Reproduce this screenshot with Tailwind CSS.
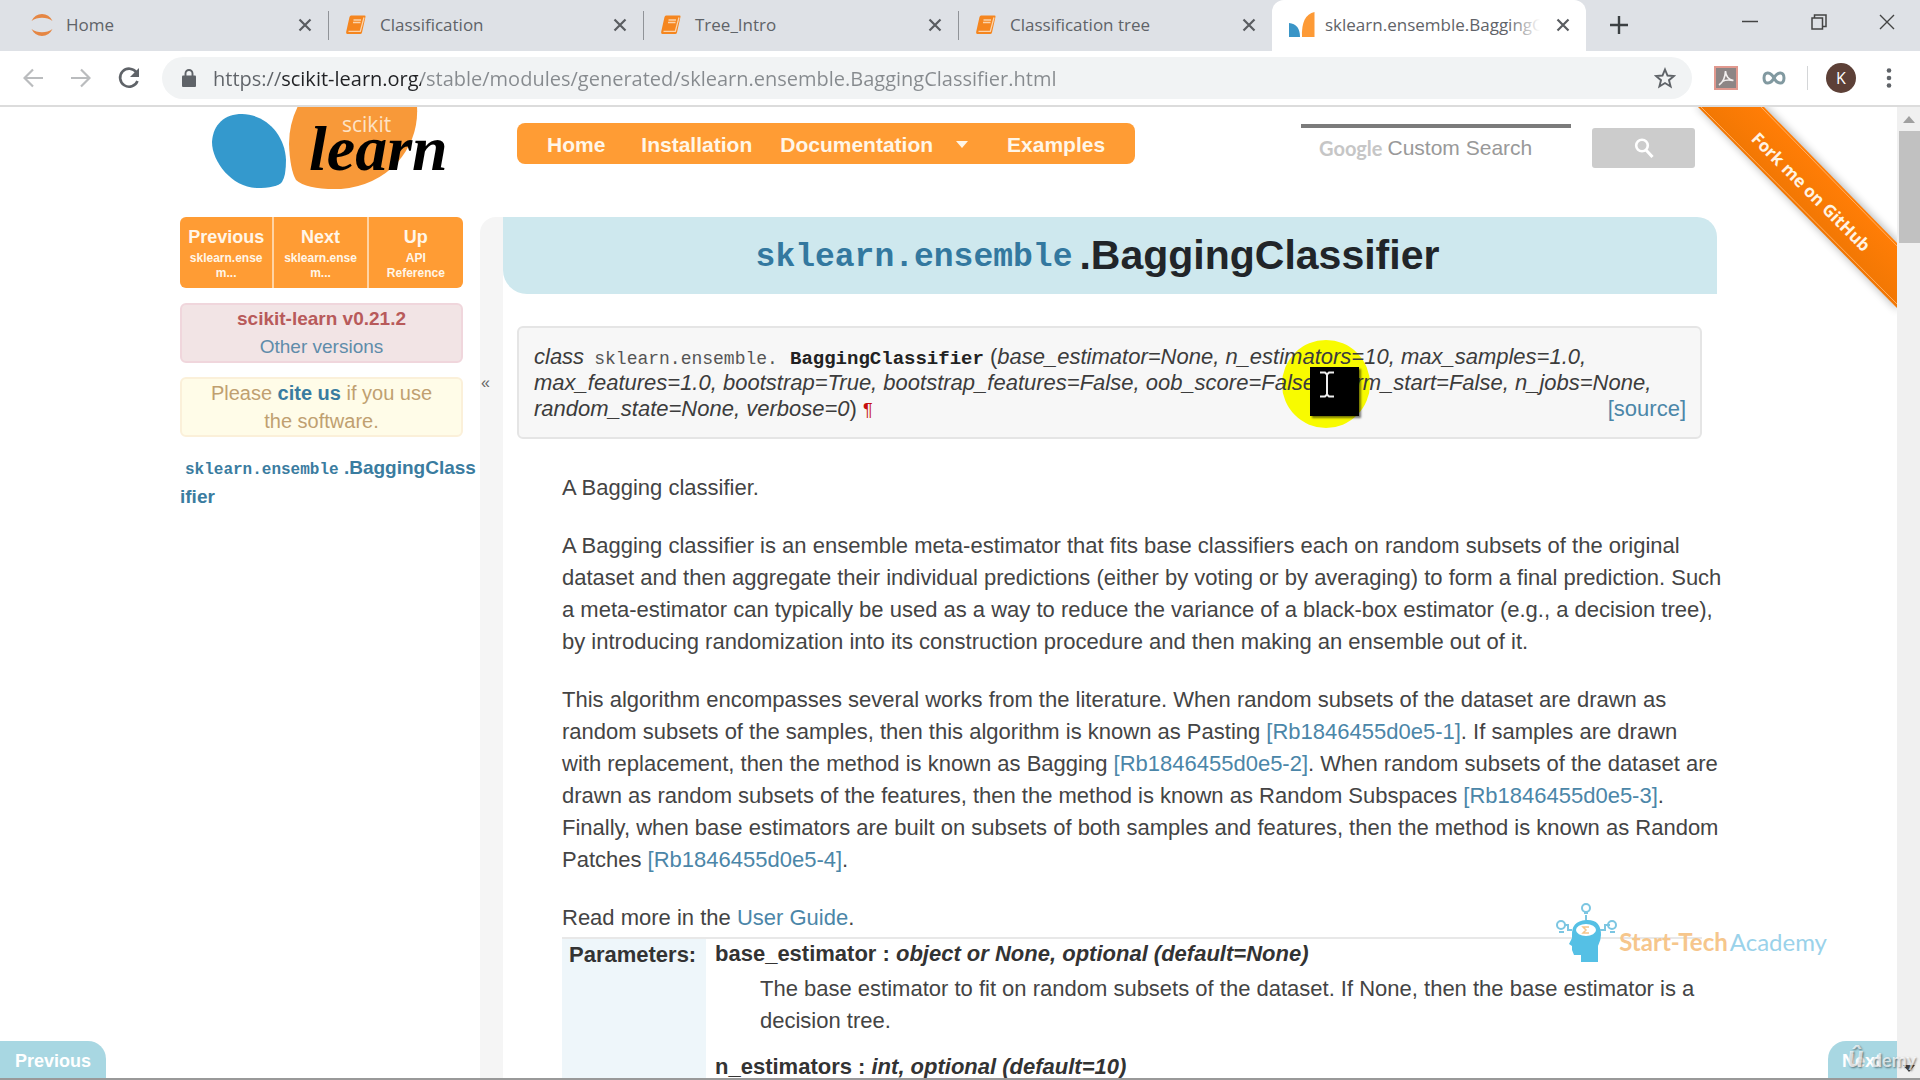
<!DOCTYPE html>
<html lang="en">
<head>
<meta charset="utf-8">
<title>sklearn.ensemble.BaggingClassifier</title>
<script src="https://cdn.jsdelivr.net/npm/@tailwindcss/browser@4"></script>
</head>
<body class="h-screen overflow-hidden bg-white font-['Liberation_Sans',Arial,sans-serif] text-[#444]">
<svg class="hidden">
  <symbol id="book" viewBox="0 0 22 22"><path d="M6 1.500h13.500q1.300 0 1 1.300L17 18.500q-.4 1.500-1.800 1.500H3q-2.300 0-1.800-2.300L4.500 3Q5 1.500 6 1.500z" fill="#f5861f"/><path d="M8.500 6h7.500M8 8.500h7.500M3.500 17.300h11.800L19 3.500" stroke="#fbd3ab" stroke-width="1.300" fill="none"/></symbol>
  <symbol id="x" viewBox="0 0 14 14"><path d="M1.500 1.500l11 11M12.500 1.500l-11 11" stroke="#5a5d61" stroke-width="2.200"/></symbol>
</svg>
<div class="flex h-full flex-col">
  <header class="shrink-0 font-['Open_Sans','Noto_Sans',sans-serif]">
    <div class="flex h-[51px] items-stretch bg-[#dee1e6] text-[17px] text-[#5f6368]">
      <div class="flex w-[328px] items-center pb-0.5 pl-[30px] pr-4">
        <svg class="h-6 w-6" viewBox="0 0 24 24"><path d="M1.500 8Q5 1 12 1t10.500 7Q18 4.800 12 4.800T1.500 8zM1.500 16Q5 23 12 23t10.500-7Q18 19.200 12 19.200T1.500 16z" fill="#e58643"/></svg>
        <span class="ml-3 grow">Home</span>
        <button aria-label="Close tab"><svg class="h-[14px] w-[14px]"><use href="#x"/></svg></button>
      </div>
      <div class="my-[11px] w-px bg-[#909398]"></div>
      <div class="flex w-[314px] items-center pb-0.5 pl-4 pr-4">
        <svg class="h-[22px] w-[22px]"><use href="#book"/></svg>
        <span class="ml-[13px] grow">Classification</span>
        <button aria-label="Close tab"><svg class="h-[14px] w-[14px]"><use href="#x"/></svg></button>
      </div>
      <div class="my-[11px] w-px bg-[#909398]"></div>
      <div class="flex w-[314px] items-center pb-0.5 pl-4 pr-4">
        <svg class="h-[22px] w-[22px]"><use href="#book"/></svg>
        <span class="ml-[13px] grow">Tree_Intro</span>
        <button aria-label="Close tab"><svg class="h-[14px] w-[14px]"><use href="#x"/></svg></button>
      </div>
      <div class="my-[11px] w-px bg-[#909398]"></div>
      <div class="flex w-[313px] items-center pb-0.5 pl-4 pr-4">
        <svg class="h-[22px] w-[22px]"><use href="#book"/></svg>
        <span class="ml-[13px] grow">Classification tree</span>
        <button aria-label="Close tab"><svg class="h-[14px] w-[14px]"><use href="#x"/></svg></button>
      </div>
      <div class="flex w-[314px] items-center rounded-t-xl bg-white pb-0.5 pl-[17px] pr-4">
        <svg class="h-[26px] w-[26px] shrink-0" viewBox="0 0 26 26"><path d="M0 11q11 1 11 14H0z" fill="#3a95c7"/><path d="M25.500 0v25H13Q12 3 25.500 0z" fill="#fd9a36"/></svg>
        <span class="relative ml-[10px] w-0 grow overflow-hidden whitespace-nowrap">sklearn.ensemble.BaggingC<span class="absolute inset-y-0 right-0 w-8 bg-linear-to-r from-white/0 to-white"></span></span>
        <button aria-label="Close tab" class="ml-4"><svg class="h-[14px] w-[14px]"><use href="#x"/></svg></button>
      </div>
      <div class="flex grow items-center pb-0.5 pl-[24px]">
        <button aria-label="New tab"><svg class="h-[18px] w-[18px]" viewBox="0 0 18 18"><path d="M9 0v18M0 9h18" stroke="#3c4043" stroke-width="2.400"/></svg></button>
      </div>
      <div class="flex w-[178px] items-center justify-between pb-2 pr-[25px]">
        <button aria-label="Minimize"><svg class="h-4 w-4" viewBox="0 0 16 16"><path d="M0 7.500h16" stroke="#444" stroke-width="1.500"/></svg></button>
        <button aria-label="Restore"><svg class="h-4 w-4" viewBox="0 0 16 16"><path d="M1 4h10.500v11H1zM3.500 4V1H15v11.500h-3.500" stroke="#444" stroke-width="1.500" fill="none"/></svg></button>
        <button aria-label="Close window"><svg class="h-4 w-4" viewBox="0 0 16 16"><path d="M1 1l14 14M15 1L1 15" stroke="#444" stroke-width="1.400"/></svg></button>
      </div>
    </div>
    <div class="flex h-[56px] items-center border-b-2 border-[#dcdcdc] bg-white pl-[23px] pr-[28px]">
      <button aria-label="Back"><svg class="h-5 w-5" viewBox="0 0 20 20"><path d="M20 10H2M10 1.500L1.500 10l8.500 8.500" stroke="#babcbe" stroke-width="2.200" fill="none"/></svg></button>
      <button aria-label="Forward" class="ml-7"><svg class="h-5 w-5" viewBox="0 0 20 20"><path d="M0 10h18M10 1.500l8.500 8.500-8.500 8.500" stroke="#babcbe" stroke-width="2.200" fill="none"/></svg></button>
      <button aria-label="Reload" class="ml-[27px]"><svg class="h-[22px] w-[22px]" viewBox="0 0 22 22"><path d="M18.500 5.500A9 9 0 1 0 19.500 14" stroke="#5f6368" stroke-width="2.600" fill="none"/><path d="M21 1v9h-9z" fill="#5f6368"/></svg></button>
      <div class="ml-[22px] flex h-[42px] grow items-center rounded-full bg-[#f1f3f4] pl-5 pr-4">
        <svg class="h-[18px] w-[14px]" viewBox="0 0 14 18"><path d="M1 6.500h12q1 0 1 1V17q0 1-1 1H1q-1 0-1-1V7.500q0-1 1-1z" fill="#5f6368"/><path d="M3.500 7V4.500a3.500 3.500 0 0 1 7 0V7" stroke="#5f6368" stroke-width="1.900" fill="none"/></svg>
        <input aria-label="Address" type="text" value="https://scikit-learn.org/stable/modules/generated/sklearn.ensemble.BaggingClassifier.html" class="ml-[17px] h-9 grow bg-linear-[90deg,#5f6368_69px,#202124_69px,#202124_208px,#868a8e_208px] bg-clip-text text-xl text-transparent outline-none">
        <button aria-label="Bookmark"><svg class="h-[22px] w-[22px]" viewBox="0 0 22 22"><path d="M11 2.500l2.500 6 6.500.5-5 4.200 1.600 6.300-5.600-3.500-5.600 3.500L7 13.200 2 9l6.500-.5z" stroke="#5f6368" stroke-width="1.900" fill="none"/></svg></button>
      </div>
      <button aria-label="PDF extension" class="ml-[22px]"><svg class="h-6 w-6" viewBox="0 0 24 24"><path d="M1 1h22v22H1z" fill="#8d8585" stroke="#e1998f" stroke-width="2"/><path d="M5 19q6-4 6.500-14 .5 8 8 9.500M8 15.500q5-2.500 11-1" stroke="#f3efef" stroke-width="1.600" fill="none"/></svg></button>
      <button aria-label="Infinity extension" class="ml-6"><svg class="h-[18px] w-6" viewBox="0 0 24 18"><path d="M12 9C9 3 2 1.500 2 9s7 6 10 0 10-7.500 10 0-7 6-10 0z" stroke="#8199a0" stroke-width="3" fill="none"/></svg></button>
      <div class="ml-[21px] h-6 w-px bg-[#d4d6d8]"></div>
      <button class="ml-[18px] h-[30px] w-[30px] rounded-full bg-[#5d4037] text-base text-white">K</button>
      <button aria-label="Menu" class="ml-[30px]"><svg class="h-5 w-[6px]" viewBox="0 0 6 20"><g fill="#5f6368"><circle cx="3" cy="2.500" r="2.300"/><circle cx="3" cy="10" r="2.300"/><circle cx="3" cy="17.500" r="2.300"/></g></svg></button>
    </div>
  </header>

  <div class="relative flex min-h-0 grow">
    <main class="min-w-0 grow overflow-hidden">
      <div class="mx-auto w-full max-w-[1537px]">
        <div class="flex h-[110px] items-start">
          <a href="#" aria-label="scikit-learn" class="ml-[32px] block">
            <svg class="h-[84px] w-[240px]" viewBox="0 0 240 84">
              <path d="M30 7C52 7 73 26 74 53q0 16-4 22-5 6-26 6C20 80 0 55 0 35 1 17 13 7 30 7z" fill="#3499cd"/>
              <path d="M86-1H205q2 32-20 57-22 23-56 26-34 1-45-9-6-10-7-36Q77 17 86-1z" fill="#f89939"/>
              <text x="130" y="25" font-family="Open Sans" font-size="21" fill="#fde3c6">scikit</text>
              <text x="97" y="63" font-family="Liberation Serif" font-style="italic" font-weight="bold" font-size="64" fill="#000">learn</text>
            </svg>
          </a>
          <nav class="ml-[65px] mt-4 flex h-[41px] w-[618px] items-center rounded-lg bg-[#ff9c34] pl-[30px] pt-0.5 text-[21px] font-bold text-[#fff6e8]">
            <a href="#">Home</a>
            <a href="#" class="ml-[36px]">Installation</a>
            <a href="#" class="ml-[28px] flex items-center">Documentation<span class="ml-[23px] border-x-[6px] border-t-[7px] border-x-transparent border-t-[#fff6e8]"></span></a>
            <a href="#" class="ml-[39px]">Examples</a>
          </nav>
          <form class="ml-auto mr-[22px] mt-4 flex">
            <label class="mt-px flex h-11 w-[270px] items-center border-t-4 border-[#7b7b7b] pl-[18px] text-[21px] text-[#ababab]">
              <span class="text-xl font-bold text-[#c6c6c6] font-['Lato']">Google</span>
              <input type="text" aria-label="Custom Search" placeholder="Custom Search" class="ml-[5px] w-0 grow outline-none placeholder:text-[#999]">
            </label>
            <button type="button" aria-label="Search" class="ml-[21px] mt-[5px] flex h-10 w-[103px] items-center justify-center rounded-[3px] bg-[#ccc]"><svg class="h-5 w-5" viewBox="0 0 20 20"><circle cx="8" cy="7.500" r="5.800" stroke="#fff" stroke-width="2.600" fill="none"/><path d="M12 12l6.500 7" stroke="#fff" stroke-width="3"/></svg></button>
          </form>
        </div>

        <div class="flex">
          <aside class="w-[300px] shrink-0 text-[19px] leading-7">
            <div class="flex h-[71px] w-[283px] overflow-hidden rounded-md bg-[#ff9c34] text-center font-bold text-[#fff6e8]">
              <a href="#" class="w-1/3 border-r-2 border-[#ffd3a3] px-2 pt-2"><span class="block text-lg leading-6">Previous</span><span class="mt-0.5 block text-xs leading-[15px]">sklearn.ense<br>m...</span></a>
              <a href="#" class="w-1/3 border-r-2 border-[#ffd3a3] px-2 pt-2"><span class="block text-lg leading-6">Next</span><span class="mt-0.5 block text-xs leading-[15px]">sklearn.ense<br>m...</span></a>
              <a href="#" class="w-1/3 px-2 pt-2"><span class="block text-lg leading-6">Up</span><span class="mt-0.5 block text-xs leading-[15px]">API<br>Reference</span></a>
            </div>
            <div class="mt-[15px] h-[60px] w-[283px] rounded-md border-2 border-[#f0d6dc] bg-[#f2e4e5] text-center"><p class="font-bold text-[#b85a5a]">scikit-learn v0.21.2</p><a href="#" class="block text-[#5f8caa]">Other versions</a></div>
            <div class="mt-[14px] h-[60px] w-[283px] rounded-md border-2 border-[#fbf0d9] bg-[#fffce8] text-center text-xl leading-7 text-[#c0a070]">Please <a href="#" class="font-bold text-[#3a7ca0]">cite us</a> if you use<br>the software.</div>
            <a href="#" class="mt-4 block whitespace-nowrap font-bold leading-[29px] text-[#3a7ca0]"><code class="ml-[5px] font-['Liberation_Mono',monospace] text-base">sklearn.ensemble</code> .BaggingClass<br>ifier</a>
          </aside>
          <button aria-label="Collapse sidebar" class="flex h-[900px] w-[23px] shrink-0 items-start rounded-tl-2xl bg-[#f5f5f5] pl-px pt-[154px] text-base text-[#666]">«</button>
          <section class="min-w-0 grow">
            <h1 class="flex h-[77px] items-center justify-center whitespace-pre rounded-bl-[24px] rounded-tr-[20px] bg-[#cee8ee] pr-[25px] text-[41px] font-bold text-[#212529]"><code class="mr-[7px] mt-1 font-['Liberation_Mono',monospace] text-[33px] text-[#33789f]">sklearn.ensemble</code>.BaggingClassifier</h1>
            <div class="ml-[14px] mr-[15px] mt-[32px] text-[22px] leading-8">
              <div class="relative h-[113px] whitespace-nowrap rounded-md border-2 border-[#e5e5e5] bg-[#f7f7f7] pl-[15px] pt-4 italic leading-[26px] text-[#3c3c3c]">
                <div class="absolute left-[763px] top-[12px] h-[88px] w-[88px] rounded-full bg-[#f8fb00]"></div>
                <p class="relative h-[26px]">class <code class="ml-1 font-['Liberation_Mono',monospace] text-lg leading-none not-italic text-[#555]">sklearn.ensemble.</code> <code class="ml-[6px] font-['Liberation_Mono',monospace] text-[19px] font-bold leading-none not-italic text-[#222]">BaggingClassifier</code> <span class="not-italic">(</span>base_estimator=None, n_estimators=10, max_samples=1.0,</p>
                <p class="relative h-[26px]">max_features=1.0, bootstrap=True, bootstrap_features=False, oob_score=False, warm_start=False, n_jobs=None,</p>
                <p class="relative flex h-[26px]"><span>random_state=None, verbose=0<span class="not-italic">)</span></span><a href="#" class="ml-[6px] text-lg leading-7 not-italic text-[#c60f0f]">¶</a><a href="#" class="ml-auto mr-[14px] not-italic text-[#4b86a8]">[source]</a></p>
                <div class="absolute left-[791px] top-[39px] h-[49px] w-[49px] bg-black shadow-[2px_2px_2px_#0008]"><svg class="ml-[9px] mt-1 h-[27px] w-4" viewBox="0 0 16 27"><path d="M1 1.500h5l2 2 2-2h5M8 3v21M1 25.500h5l2-2 2 2h5" stroke="#eee" stroke-width="2" fill="none"/></svg></div>
              </div>
              <div class="ml-[45px] mt-[33px] whitespace-nowrap">
                <p>A Bagging classifier.</p>
                <p class="mt-[26px]">A Bagging classifier is an ensemble meta-estimator that fits base classifiers each on random subsets of the original<br>dataset and then aggregate their individual predictions (either by voting or by averaging) to form a final prediction. Such<br>a meta-estimator can typically be used as a way to reduce the variance of a black-box estimator (e.g., a decision tree),<br>by introducing randomization into its construction procedure and then making an ensemble out of it.</p>
                <p class="mt-[26px]">This algorithm encompasses several works from the literature. When random subsets of the dataset are drawn as<br>random subsets of the samples, then this algorithm is known as Pasting <a href="#" class="text-[#4b86a8]">[Rb1846455d0e5-1]</a>. If samples are drawn<br>with replacement, then the method is known as Bagging <a href="#" class="text-[#4b86a8]">[Rb1846455d0e5-2]</a>. When random subsets of the dataset are<br>drawn as random subsets of the features, then the method is known as Random Subspaces <a href="#" class="text-[#4b86a8]">[Rb1846455d0e5-3]</a>.<br>Finally, when base estimators are built on subsets of both samples and features, then the method is known as Random<br>Patches <a href="#" class="text-[#4b86a8]">[Rb1846455d0e5-4]</a>.</p>
                <p class="mt-[26px]">Read more in the <a href="#" class="text-[#4b86a8]">User Guide</a>.</p>
                <table class="mt-[3px] w-full border-t-2 border-[#e8e8e8] text-left">
                  <tbody><tr class="align-top">
                    <th class="h-[150px] w-[144px] bg-[#eef6fa] pl-[7px] text-[#333]">Parameters:</th>
                    <td class="pl-[9px]">
                      <dl>
                        <dt class="-mt-px font-bold text-[#333]">base_estimator : <i>object or None, optional (default=None)</i></dt>
                        <dd class="ml-[45px] mt-[3px]">The base estimator to fit on random subsets of the dataset. If None, then the base estimator is a<br>decision tree.</dd>
                        <dt class="mt-[14px] font-bold text-[#333]">n_estimators : <i>int, optional (default=10)</i></dt>
                      </dl>
                    </td>
                  </tr></tbody>
                </table>
              </div>
            </div>
          </section>
        </div>
      </div>
    </main>

    <a href="#" class="absolute right-[23px] top-0" aria-label="Fork me on GitHub">
      <svg class="h-[210px] w-[210px]" viewBox="0 0 210 210">
        <defs><linearGradient id="rib" x1="0" y1="1" x2="1" y2="0"><stop offset=".3" stop-color="#e07000"/><stop offset=".65" stop-color="#ff7d06"/></linearGradient></defs>
        <path d="M9-2h68l135 138v68z" fill="#000" opacity=".28" style="filter:blur(4px)"/>
        <path d="M10-1h66l134 137v65z" fill="url(#rib)"/>
        <path d="M13-1l199 200M73-1l139 142" stroke="#ffb066" stroke-width="1" fill="none"/>
        <text x="124" y="91" transform="rotate(45 124 85)" text-anchor="middle" font-family="Open Sans" font-weight="bold" font-size="17" fill="#fff3e2">Fork me on GitHub</text>
      </svg>
    </a>

    <div class="flex w-[23px] shrink-0 flex-col items-center bg-[#f0f0f0] pt-[9px] pb-[8px]">
      <span class="border-x-[6px] border-b-[7px] border-x-transparent border-b-[#a0a0a0]"></span>
      <span class="mt-2 h-[112px] w-[21px] self-end bg-[#c1c1c1]"></span>
      <span class="mt-auto border-x-[6px] border-t-[7px] border-x-transparent border-t-[#444]"></span>
    </div>

    <a href="#" class="absolute bottom-0 left-0 flex h-[39px] w-[106px] items-center justify-center rounded-tr-[18px] bg-[#a8d7e2] text-lg font-bold text-white">Previous</a>
    <a href="#" class="absolute bottom-0 right-[23px] flex h-[39px] w-[69px] items-center rounded-tl-[18px] bg-[#a8d7e2] pl-[14px] text-lg font-bold text-white">Next</a>
    <div class="absolute bottom-[6px] right-[4px] flex items-baseline font-['Lato',sans-serif] text-lg font-bold leading-7 text-white/70 text-shadow-[1px_1px_2px_#0007]"><span class="text-3xl italic leading-7">û</span><span class="ml-2">demy</span></div>

    <div class="absolute bottom-[117px] right-[93px] flex items-end font-['Lato',sans-serif] text-[24px]">
      <svg class="mr-px h-[60px] w-[62px]" viewBox="0 0 62 60">
        <path d="M16 33Q15 18 30 17t15 15q0 5-3 11v16H25v-7h-7l-2-5v-4l-3-2 3-6z" fill="#55c0e5"/>
        <ellipse cx="30" cy="27" rx="10" ry="6" fill="#fff"/><path d="M33 24h-6l3 3-3 3h6" stroke="#f5c58b" stroke-width="1.500" fill="none"/>
        <g stroke="#7cc6e2" stroke-width="2" fill="none"><path d="M30 17v-5M28 10h4M16 27h-4v-5H8M44 27h5v-5h5M3 29h5M54 29h5"/><circle cx="30" cy="5" r="4"/><circle cx="5" cy="22" r="4"/><circle cx="56" cy="22" r="4"/></g>
      </svg>
      <span class="pb-[7px] leading-7"><b class="font-bold text-[#f6c68c]">Start-Tech</b><span class="ml-[2px] text-[#9ad2ea]">Academy</span></span>
    </div>
    <div class="absolute inset-x-0 bottom-0 h-[2px] bg-[#999]"></div>
  </div>
</div>
</body>
</html>
